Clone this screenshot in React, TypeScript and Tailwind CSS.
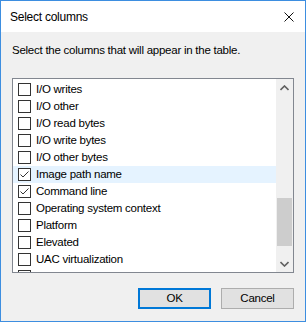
const columns = [
  { name: "I/O writes", checked: false },
  { name: "I/O other", checked: false },
  { name: "I/O read bytes", checked: false },
  { name: "I/O write bytes", checked: false },
  { name: "I/O other bytes", checked: false },
  { name: "Image path name", checked: true, hover: true },
  { name: "Command line", checked: true },
  { name: "Operating system context", checked: false },
  { name: "Platform", checked: false },
  { name: "Elevated", checked: false },
  { name: "UAC virtualization", checked: false },
  { name: "", checked: false },
];

function CheckBox({ checked }: { checked: boolean }) {
  return (
    <span className="w-[13px] h-[13px] border border-[#333333] bg-white flex items-center justify-center shrink-0">
      {checked && (
        <svg width="11" height="11" viewBox="0 0 11 11">
          <path d="M1.5 5.5 L4 8 L9.5 2.5" fill="none" stroke="#333" strokeWidth="1" />
        </svg>
      )}
    </span>
  );
}

export default function App() {
  return (
    <div className="w-[306px] h-[322px] border border-[#3d8ee0] bg-[#f0f0f0] flex flex-col text-[11.5px] tracking-[-0.25px] text-black font-['Liberation_Sans',sans-serif]">
      <div className="h-[31px] bg-white flex items-center justify-between pl-[9px] pr-[11px] shrink-0 text-[12px]">
        <span>Select columns</span>
        <svg width="10" height="10" viewBox="0 0 10 10">
          <path d="M0.5 0.5 L9.5 9.5 M9.5 0.5 L0.5 9.5" stroke="#111" strokeWidth="1" />
        </svg>
      </div>

      <p className="pt-[10px] pl-[11px] leading-[16px]">Select the columns that will appear in the table.</p>

      <div className="mt-[20px] ml-[11px] w-[282px] h-[195px] border border-[#828790] bg-white flex">
        <ul className="flex-1 overflow-hidden pt-[2px]">
          {columns.map((col, i) => (
            <li
              key={i}
              className={`h-[17px] flex items-center gap-[5px] pl-[5px] whitespace-nowrap ${col.hover ? "bg-[#e5f3ff]" : ""}`}
            >
              <CheckBox checked={col.checked} />
              {col.name && <span>{col.name}</span>}
            </li>
          ))}
        </ul>
        <div className="w-[17px] bg-[#f0f0f0] flex flex-col items-center">
          <div className="h-[17px] flex items-center justify-center">
            <svg width="9" height="6" viewBox="0 0 9 6">
              <path d="M0.5 5 L4.5 1 L8.5 5" fill="none" stroke="#606060" strokeWidth="1.6" />
            </svg>
          </div>
          <div className="h-[102px]" />
          <div className="w-[15px] h-[48px] bg-[#cdcdcd]" />
          <div className="flex-1" />
          <div className="h-[17px] flex items-center justify-center">
            <svg width="9" height="6" viewBox="0 0 9 6">
              <path d="M0.5 1 L4.5 5 L8.5 1" fill="none" stroke="#606060" strokeWidth="1.6" />
            </svg>
          </div>
        </div>
      </div>

      <div className="mt-[15px] pr-[11px] flex justify-end gap-[10px]">
        <button className="w-[73px] h-[21px] bg-[#e1e1e1] border-2 border-[#0078d7] leading-none">OK</button>
        <button className="w-[73px] h-[21px] bg-[#e1e1e1] border border-[#adadad] leading-none">Cancel</button>
      </div>
    </div>
  );
}
